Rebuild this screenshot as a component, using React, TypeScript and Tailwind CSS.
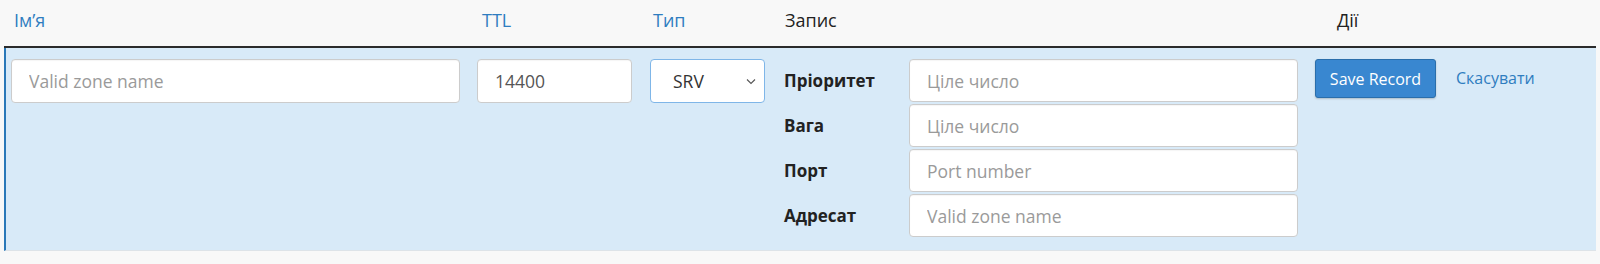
import React from "react";

const inputCls =
  "h-full w-full rounded-[4px] border border-[#cccccc] bg-white pl-[17px] text-[17.5px] text-[#555] placeholder:text-[#9a9a9a] outline-none shadow-[inset_0_1px_1px_rgba(0,0,0,0.04)]";

function RecordRow({ label, placeholder }: { label: string; placeholder: string }) {
  return (
    <div className="flex h-[43px] items-center">
      <div className="w-[125px] text-[17px] font-bold text-[#222]">{label}</div>
      <div className="h-full w-[389px]">
        <input className={inputCls} placeholder={placeholder} />
      </div>
    </div>
  );
}

export default function App() {
  return (
    <div className="min-h-[264px] w-[1600px] bg-[#f8f8f8] px-[4px] font-['Open_Sans',sans-serif]">
      {/* header */}
      <div className="flex h-[46px] pl-[2px] pt-[8px] text-[18px] leading-[25px]">
        <div className="w-[466px] pl-[8px] text-[#2f7dc0]">Ім’я</div>
        <div className="w-[173px] pl-[10px] text-[#2f7dc0]">TTL</div>
        <div className="w-[134px] pl-[8px] text-[#2f7dc0]">Тип</div>
        <div className="w-[531px] pl-[6px] text-[#222]">Запис</div>
        <div className="flex-1 pl-[27px] text-[#222]">Дії</div>
      </div>
      <div className="border-t-2 border-[#2b2b2b]">
        <div className="flex border-b border-l-2 border-b-[#dde3e8] border-l-[#2a78b8] bg-[#d8eaf8] pb-[13px] pt-[11px]">
          {/* name */}
          <div className="w-[466px] pl-[5px]">
            <div className="h-[44px] w-[449px]">
              <input className={inputCls} placeholder="Valid zone name" />
            </div>
          </div>
          {/* ttl */}
          <div className="w-[173px] pl-[5px]">
            <div className="h-[44px] w-[155px]">
              <input className={inputCls} defaultValue="14400" />
            </div>
          </div>
          {/* type */}
          <div className="w-[134px] pl-[5px]">
            <div className="relative flex h-[44px] w-[115px] items-center rounded-[4px] border border-[#7fb6e8] bg-white pl-[22px] text-[17.5px] text-[#333]">
              SRV
              <svg
                className="absolute right-[8px] top-[18px]"
                width="10"
                height="7"
                viewBox="0 0 10 7"
                fill="none"
              >
                <polyline points="1,1.5 5,5.5 9,1.5" stroke="#555" strokeWidth="1.1" />
              </svg>
            </div>
          </div>
          {/* record */}
          <div className="flex w-[531px] flex-col gap-[2px] pl-[5px]">
            <RecordRow label="Пріоритет" placeholder="Ціле число" />
            <RecordRow label="Вага" placeholder="Ціле число" />
            <RecordRow label="Порт" placeholder="Port number" />
            <RecordRow label="Адресат" placeholder="Valid zone name" />
          </div>
          {/* actions */}
          <div className="flex flex-1 items-start pl-[5px]">
            <button className="h-[39px] w-[121px] rounded-[3px] border border-[#2a6eab] bg-[#3987d0] text-[16px] text-white shadow-[0_1px_2px_rgba(0,0,0,0.2)]">
              Save Record
            </button>
            <a className="ml-[20px] mt-[7px] text-[16px] text-[#2f7dc0]">Скасувати</a>
          </div>
        </div>
      </div>
    </div>
  );
}
